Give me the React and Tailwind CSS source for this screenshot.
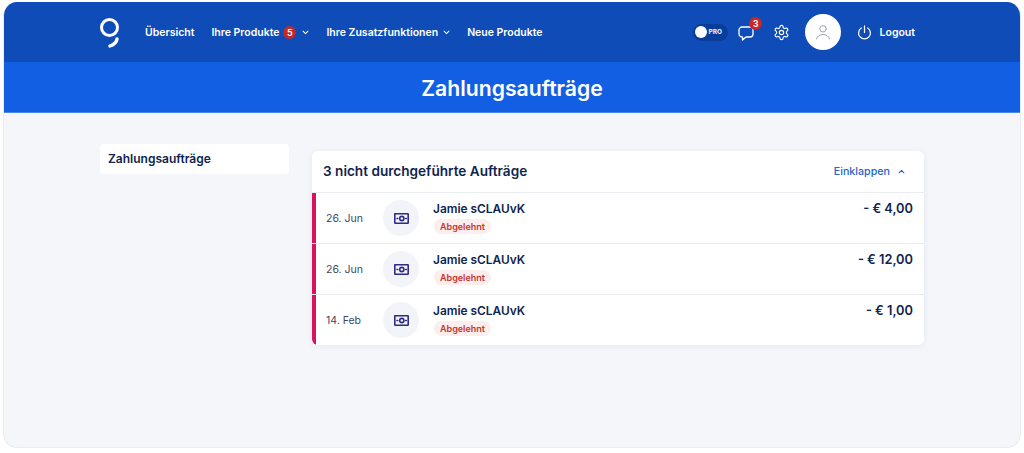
import React from "react";

const Chevron = ({ up, className }) => (
  <svg viewBox="0 0 10 6" className={className} fill="none" stroke="currentColor" strokeWidth="1.5" strokeLinecap="round" strokeLinejoin="round">
    <path d={up ? "M1.5 4.8 5 1.3l3.5 3.5" : "M1.5 1.2 5 4.7l3.5-3.5"} />
  </svg>
);

const Money = () => (
  <svg viewBox="0 0 15 11" className="w-[15px] h-[11px]" fill="none" stroke="#2e2a85" strokeWidth="1.600">
    <path d="M.8.800h13a.5.500 0 0 1 .4.400v8.600a.5.500 0 0 1-.4.400H1.300a.5.500 0 0 1-.5-.4z" strokeLinejoin="round" />
    <circle cx="7.800" cy="5.500" r="2.100" />
    <path d="M3 5.500h.7M11.700 5.500h.6" strokeLinecap="round" />
  </svg>
);

const Row = ({ date, amount }) => (
  <div className="flex h-[51px] border-t border-[#e9ecf1] bg-white">
    <div className="w-[4px] bg-[#d9125f] shrink-0" />
    <div className="w-[57px] ml-[10px] pt-[19px] text-[10.500px] leading-[14px] text-[#3c4663]">{date}</div>
    <div className="w-[36px] h-[36px] mt-[7px] rounded-full bg-[#f3f4f9] flex items-center justify-center shrink-0">
      <Money />
    </div>
    <div className="ml-[14px] pt-[7px]">
      <div className="text-[11.900px] leading-[17px] font-semibold text-[#10244f]">Jamie sCLAUvK</div>
      <div className="w-fit h-[15px] mt-[2px] ml-[1px] rounded-full bg-[#fdeeee] px-[6px] text-[9px] leading-[15px] font-semibold text-[#c5352e]">Abgelehnt</div>
    </div>
    <div className="ml-auto pr-[11px] pt-[7px] text-[12.800px] leading-[17px] font-semibold text-[#10244f]">{amount}</div>
  </div>
);

export default function App() {
  return (
    <div className="w-[1024px] h-[453px] bg-white overflow-hidden pl-[3px] pt-[2px] font-['Inter',sans-serif]">
      <div className="w-[1018px] h-[446px] rounded-[14px] overflow-hidden bg-[#f4f6fa] border-b border-x border-[#e8ecf3] flex flex-col">
        <header className="h-[60px] bg-[#0f4cb8] flex items-center pl-[96px] pr-[105px] text-white text-[10.500px] font-semibold shrink-0">
          <svg viewBox="0 0 20 32" className="w-[20px] h-[32px]" fill="none" stroke="white" strokeWidth="3">
            <circle cx="9.500" cy="11.500" r="8" />
            <path d="M17 23c-.4 3-2.500 5.500-7 7" strokeWidth="3.400" strokeLinecap="round" />
          </svg>
          <span className="ml-[25px] mt-[1px]">Übersicht</span>
          <span className="ml-[17px] mt-[1px]">Ihre Produkte</span>
          <span className="ml-[4px] w-[13px] h-[13px] rounded-full bg-[#c62828] text-[9px] leading-[13px] text-center">5</span>
          <Chevron className="ml-[6px] w-[7px] h-[5px]" />
          <span className="ml-[17px] mt-[1px]">Ihre Zusatzfunktionen</span>
          <Chevron className="ml-[5px] w-[7px] h-[5px]" />
          <span className="ml-[17px] mt-[1px]">Neue Produkte</span>
          <div className="ml-auto flex items-center">
            <div className="w-[35px] h-[17px] rounded-full bg-[#0a3d9a] flex items-center pl-[2px]">
              <span className="w-[12px] h-[12px] rounded-full bg-white" />
              <span className="ml-[2px] mt-[1px] text-[6.500px] font-extrabold text-[#dbe6fb]">PRO</span>
            </div>
            <div className="relative ml-[10px] w-[16px] h-[16px]">
              <svg viewBox="0 0 16 16" className="w-[16px] h-[16px] mt-[1px]" fill="none" stroke="white" strokeWidth="1.300" strokeLinejoin="round">
                <path d="M4 2h8a3 3 0 0 1 3 3v4a3 3 0 0 1-3 3H8l-3.500 3v-3.100A3 3 0 0 1 1 9V5a3 3 0 0 1 3-3z" />
              </svg>
              <span className="absolute -top-[7px] left-[11.500px] w-[13px] h-[13px] rounded-full bg-[#c62828] text-[9px] leading-[13px] text-center">3</span>
            </div>
            <svg viewBox="0 0 24 24" className="ml-[19px] w-[17px] h-[17px]" fill="none" stroke="white" strokeWidth="1.600" strokeLinecap="round" strokeLinejoin="round">
              <path d="M12.220 2h-.44a2 2 0 0 0-2 2v.18a2 2 0 0 1-1 1.730l-.43.25a2 2 0 0 1-2 0l-.15-.08a2 2 0 0 0-2.730.73l-.22.38a2 2 0 0 0 .73 2.730l.15.1a2 2 0 0 1 1 1.720v.51a2 2 0 0 1-1 1.740l-.15.09a2 2 0 0 0-.73 2.730l.22.38a2 2 0 0 0 2.730.73l.15-.08a2 2 0 0 1 2 0l.43.25a2 2 0 0 1 1 1.730V20a2 2 0 0 0 2 2h.44a2 2 0 0 0 2-2v-.18a2 2 0 0 1 1-1.730l.43-.25a2 2 0 0 1 2 0l.15.08a2 2 0 0 0 2.730-.73l.22-.39a2 2 0 0 0-.73-2.730l-.15-.08a2 2 0 0 1-1-1.740v-.5a2 2 0 0 1 1-1.740l.15-.09a2 2 0 0 0 .73-2.730l-.22-.38a2 2 0 0 0-2.730-.73l-.15.08a2 2 0 0 1-2 0l-.43-.25a2 2 0 0 1-1-1.730V4a2 2 0 0 0-2-2z" />
              <circle cx="12" cy="12" r="3" />
            </svg>
            <div className="ml-[15px] w-[36px] h-[36px] rounded-full bg-white flex items-center justify-center">
              <svg viewBox="0 0 16 16" className="w-[16px] h-[16px]" fill="none" stroke="#9aa3b2" strokeWidth="1" strokeLinecap="round">
                <circle cx="8" cy="4.800" r="3.200" />
                <path d="M1.500 15c.8-3 3.300-4.500 6.500-4.500s5.700 1.500 6.500 4.500" />
              </svg>
            </div>
            <svg viewBox="0 0 16 16" className="ml-[16px] w-[15px] h-[15px]" fill="none" stroke="white" strokeWidth="1.300" strokeLinecap="round">
              <path d="M8 1v7M4.600 3.200a6.300 6.300 0 1 0 6.800 0" />
            </svg>
            <span className="ml-[8px] mt-[1px]">Logout</span>
          </div>
        </header>
        <div className="h-[51px] pt-[4px] bg-[#135fe3] flex items-center justify-center text-white text-[21.200px] font-semibold border-b border-[#4b86ec] shrink-0">
          Zahlungsaufträge
        </div>
        <main className="flex flex-1 pl-[96px] pt-[31px]">
          <aside className="w-[189px] h-[30px] rounded-[4px] bg-white pl-[8px] text-[12px] leading-[30px] font-semibold text-[#10244f]">
            Zahlungsaufträge
          </aside>
          <section className="ml-[23px] mt-[7px] w-[612px] h-[194px] rounded-[6px] bg-white overflow-hidden shadow-[0_1px_6px_rgba(30,50,90,0.08)]">
            <div className="h-[41px] flex items-center pl-[11px] pr-[19px]">
              <span className="text-[13.600px] font-semibold text-[#10244f]">3 nicht durchgeführte Aufträge</span>
              <span className="ml-auto mt-[1px] text-[10.700px] font-medium text-[#2563c9]">Einklappen</span>
              <Chevron up className="ml-[8px] w-[7px] h-[5px] text-[#2563c9]" />
            </div>
            <Row date="26. Jun" amount="- € 4,00" />
            <Row date="26. Jun" amount="- € 12,00" />
            <Row date="14. Feb" amount="- € 1,00" />
          </section>
        </main>
      </div>
    </div>
  );
}
